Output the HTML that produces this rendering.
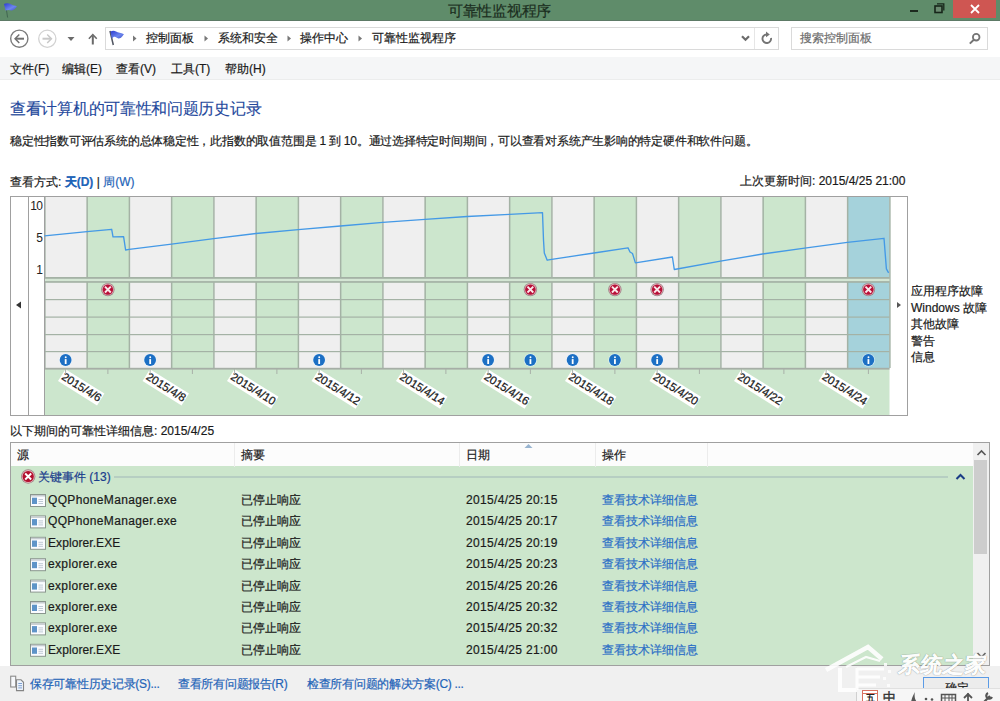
<!DOCTYPE html>
<html><head><meta charset="utf-8">
<style>
*{margin:0;padding:0;box-sizing:border-box}
html,body{width:1000px;height:701px;overflow:hidden;background:#fff;font-family:"Liberation Sans",sans-serif;font-size:12px;color:#1a1a1a;-webkit-text-stroke:0.2px currentColor}
.a{position:absolute;white-space:nowrap}
svg{-webkit-text-stroke:0}
#title{left:0;top:0;width:1000px;height:21px;background:#5f8c6a}
#menu{left:0;top:57px;width:1000px;height:23px;background:#f5f6f7;border-bottom:1px solid #eceded}
.lnk{color:#1f64b8}
.row{position:absolute;left:0;width:1000px;height:21px;line-height:16px}
.row span{position:absolute;top:0}
.c1{left:48px;letter-spacing:0.35px}.c2{left:241px}.c3{left:466px;letter-spacing:0.33px}.c4{left:602px;color:#2a6ec6}
</style></head><body>
<!-- title bar -->
<div class="a" id="title"></div>
<div class="a" style="left:448px;top:2px;font-size:15px;letter-spacing:-0.3px;color:#1b2e20;line-height:17px">可靠性监视程序</div>
<div class="a" style="left:953px;top:0;width:43px;height:18px;background:#cf5652"></div>
<svg class="a" style="left:0;top:0" width="1000" height="60">
 <rect x="0" y="20" width="1000" height="1" fill="#5d7a66"/>
 <!-- title flag -->
 <defs><linearGradient id="fg" x1="0" y1="0" x2="1" y2="1"><stop offset="0" stop-color="#2a3ad0"/><stop offset="0.6" stop-color="#6d86ee"/><stop offset="1" stop-color="#3d50c8"/></linearGradient></defs>
 <path d="M5.5,4 L7.6,17.5" stroke="#3b5e4c" stroke-width="1" opacity="0.8"/>
 <path d="M4,4 C6,2.8 9,3 11,4.3 C13,5.5 15,5.4 17,6.5 C15.5,8 14,10.6 11.5,10.4 C9.5,10.2 8,9.4 5.6,10.6 Z" fill="url(#fg)"/>
 <!-- min / restore / close -->
 <rect x="910" y="10" width="8" height="2" fill="#1c2a1e"/>
 <rect x="935" y="6" width="7" height="6.5" fill="#6a8a70" stroke="#17261a" stroke-width="1.6"/>
 <path d="M937,3.8 H943.8 V10.5" fill="none" stroke="#17261a" stroke-width="1.3"/>
 <path d="M971,5 L979,13 M979,5 L971,13" stroke="#fff" stroke-width="1.8"/>
 <!-- back / forward -->
 <circle cx="19.3" cy="38.7" r="8.6" fill="none" stroke="#7c7c7c" stroke-width="1.4"/>
 <path d="M16,38.7 H24" stroke="#707070" stroke-width="2"/><path d="M14,38.7 L18.8,34 L19.8,35 L16.2,38.7 L19.8,42.4 L18.8,43.4Z" fill="#707070"/>
 <circle cx="47.3" cy="38.7" r="8.6" fill="none" stroke="#d2d2d2" stroke-width="1.3"/>
 <path d="M42.5,38.7 H50.5" stroke="#c8c8c8" stroke-width="2"/><path d="M52.5,38.7 L47.7,34 L46.7,35 L50.3,38.7 L46.7,42.4 L47.7,43.4Z" fill="#c8c8c8"/>
 <path d="M67.5,37 H74.5 L71,41Z" fill="#6a6a6a"/>
 <path d="M92.8,44.5 V36" stroke="#6a6a6a" stroke-width="2"/><path d="M92.8,33.5 L97.3,38.2 L96.2,39.2 L92.8,35.8 L89.4,39.2 L88.3,38.2Z" fill="#6a6a6a"/>
 <!-- address bar -->
 <rect x="105.5" y="27.5" width="673" height="22" fill="#fff" stroke="#dadada"/>
 <rect x="754" y="28" width="1" height="21" fill="#e6e6e6"/>
 <rect x="791.5" y="27.5" width="196" height="22" fill="#fff" stroke="#dadada"/>
 <path d="M110,31 L113.3,45" stroke="#505560" stroke-width="1.5"/>
 <path d="M110.5,31.5 C112.5,30.3 114.5,30.4 116,31.5 C118,32.8 121,32.5 124,34.2 C122.5,35.5 121.5,38.6 118.5,38.4 C116.5,38.1 115.5,36.3 113.5,37 L111.8,38.8 Z" fill="url(#fg)"/>
 <path d="M133,35.5 L136.5,38.5 L133,41.5Z" fill="#777"/>
 <path d="M204.5,35.5 L208,38.5 L204.5,41.5Z" fill="#777"/>
 <path d="M287.5,35.5 L291,38.5 L287.5,41.5Z" fill="#777"/>
 <path d="M358.5,35.5 L362,38.5 L358.5,41.5Z" fill="#777"/>
 <path d="M742,36.3 L745.5,39.8 L749,36.3" fill="none" stroke="#6c6c6c" stroke-width="2.2"/>
 <path d="M771,38 A4.3,4.3 0 1 1 766.6,34.45" fill="none" stroke="#747474" stroke-width="1.9"/>
 <path d="M766,31.6 L769.8,34.45 L766,37.3Z" fill="#747474"/>
 <circle cx="976.2" cy="37.2" r="3.3" fill="none" stroke="#747474" stroke-width="1.8"/>
 <path d="M973.8,39.8 L969.8,43.6" stroke="#747474" stroke-width="2"/>
</svg>
<div class="a" style="left:146px;top:30px;line-height:16px">控制面板</div>
<div class="a" style="left:218px;top:30px;line-height:16px">系统和安全</div>
<div class="a" style="left:300px;top:30px;line-height:16px">操作中心</div>
<div class="a" style="left:372px;top:30px;line-height:16px">可靠性监视程序</div>
<div class="a" style="left:800px;top:30px;line-height:16px;color:#6d6d6d">搜索控制面板</div>
<!-- menu -->
<div class="a" id="menu"></div>
<div class="a" style="left:10px;top:61px;line-height:16px">文件(F)</div>
<div class="a" style="left:62px;top:61px;line-height:16px">编辑(E)</div>
<div class="a" style="left:116px;top:61px;line-height:16px">查看(V)</div>
<div class="a" style="left:171px;top:61px;line-height:16px">工具(T)</div>
<div class="a" style="left:225px;top:61px;line-height:16px">帮助(H)</div>
<!-- heading -->
<div class="a" style="left:10px;top:99px;font-size:16px;letter-spacing:-0.3px;line-height:20px;color:#24489c;-webkit-text-stroke:0.1px #24489c">查看计算机的可靠性和问题历史记录</div>
<div class="a" style="left:10px;top:133px;line-height:16px;letter-spacing:-0.22px">稳定性指数可评估系统的总体稳定性，此指数的取值范围是 1 到 10。通过选择特定时间期间，可以查看对系统产生影响的特定硬件和软件问题。</div>
<div class="a" style="left:10px;top:174px;line-height:16px">查看方式: <b class="lnk">天(D)</b> | <span class="lnk">周(W)</span></div>
<div class="a" style="left:740px;top:173px;line-height:16px">上次更新时间: 2015/4/25 21:00</div>
<!-- chart -->
<div class="a" style="left:10px;top:196px;width:898px;height:220px;border:1px solid #a0a0a0"></div>
<svg class="a" style="left:0;top:0" width="1000" height="701">
<rect x="44.50" y="197" width="42.25" height="172" fill="#efefef"/>
<rect x="86.75" y="197" width="42.25" height="172" fill="#cce6cd"/>
<rect x="129.00" y="197" width="42.25" height="172" fill="#efefef"/>
<rect x="171.25" y="197" width="42.25" height="172" fill="#cce6cd"/>
<rect x="213.50" y="197" width="42.25" height="172" fill="#efefef"/>
<rect x="255.75" y="197" width="42.25" height="172" fill="#cce6cd"/>
<rect x="298.00" y="197" width="42.25" height="172" fill="#efefef"/>
<rect x="340.25" y="197" width="42.25" height="172" fill="#cce6cd"/>
<rect x="382.50" y="197" width="42.25" height="172" fill="#efefef"/>
<rect x="424.75" y="197" width="42.25" height="172" fill="#cce6cd"/>
<rect x="467.00" y="197" width="42.25" height="172" fill="#efefef"/>
<rect x="509.25" y="197" width="42.25" height="172" fill="#cce6cd"/>
<rect x="551.50" y="197" width="42.25" height="172" fill="#efefef"/>
<rect x="593.75" y="197" width="42.25" height="172" fill="#cce6cd"/>
<rect x="636.00" y="197" width="42.25" height="172" fill="#efefef"/>
<rect x="678.25" y="197" width="42.25" height="172" fill="#cce6cd"/>
<rect x="720.50" y="197" width="42.25" height="172" fill="#efefef"/>
<rect x="762.75" y="197" width="42.25" height="172" fill="#cce6cd"/>
<rect x="805.00" y="197" width="42.25" height="172" fill="#efefef"/>
<rect x="847.25" y="197" width="42.25" height="172" fill="#a5d2db"/>
<rect x="44.5" y="369" width="845.00" height="46" fill="#cce6cd"/>
<rect x="44.5" y="277" width="845.00" height="5.8" fill="#a4b2a5"/>
<rect x="44.5" y="299.0" width="845.00" height="1.2" fill="#a4b2a5"/>
<rect x="44.5" y="316.5" width="845.00" height="1.2" fill="#a4b2a5"/>
<rect x="44.5" y="334.0" width="845.00" height="1.2" fill="#a4b2a5"/>
<rect x="44.5" y="351.0" width="845.00" height="1.2" fill="#a4b2a5"/>
<rect x="44.5" y="367.8" width="845.00" height="1.8" fill="#a6aea6"/>
<rect x="44.15" y="197" width="1.5" height="171" fill="#a4b2a5"/>
<rect x="86.40" y="197" width="1.5" height="171" fill="#a4b2a5"/>
<rect x="128.65" y="197" width="1.5" height="171" fill="#a4b2a5"/>
<rect x="170.90" y="197" width="1.5" height="171" fill="#a4b2a5"/>
<rect x="213.15" y="197" width="1.5" height="171" fill="#a4b2a5"/>
<rect x="255.40" y="197" width="1.5" height="171" fill="#a4b2a5"/>
<rect x="297.65" y="197" width="1.5" height="171" fill="#a4b2a5"/>
<rect x="339.90" y="197" width="1.5" height="171" fill="#a4b2a5"/>
<rect x="382.15" y="197" width="1.5" height="171" fill="#a4b2a5"/>
<rect x="424.40" y="197" width="1.5" height="171" fill="#a4b2a5"/>
<rect x="466.65" y="197" width="1.5" height="171" fill="#a4b2a5"/>
<rect x="508.90" y="197" width="1.5" height="171" fill="#a4b2a5"/>
<rect x="551.15" y="197" width="1.5" height="171" fill="#a4b2a5"/>
<rect x="593.40" y="197" width="1.5" height="171" fill="#a4b2a5"/>
<rect x="635.65" y="197" width="1.5" height="171" fill="#a4b2a5"/>
<rect x="677.90" y="197" width="1.5" height="171" fill="#a4b2a5"/>
<rect x="720.15" y="197" width="1.5" height="171" fill="#a4b2a5"/>
<rect x="762.40" y="197" width="1.5" height="171" fill="#a4b2a5"/>
<rect x="804.65" y="197" width="1.5" height="171" fill="#a4b2a5"/>
<rect x="846.90" y="197" width="1.5" height="171" fill="#a4b2a5"/>
<rect x="889.15" y="197" width="1.5" height="171" fill="#a4b2a5"/>
<rect x="44.5" y="278.8" width="845.00" height="2.3" fill="#d4e6d4"/>
<rect x="28" y="197" width="1" height="218" fill="#a0a0a0"/>
<rect x="44" y="197" width="1" height="218" fill="#a0a0a0"/>
<text x="42.3" y="209.5" text-anchor="end" font-size="12" letter-spacing="-0.6" fill="#222">10</text>
<text x="42.3" y="241.5" text-anchor="end" font-size="12" letter-spacing="-0.6" fill="#222">5</text>
<text x="42.3" y="274" text-anchor="end" font-size="12" letter-spacing="-0.6" fill="#222">1</text>
<polyline fill="none" stroke="#4499e6" stroke-width="1.35" stroke-linejoin="round" points="44.5,235.8 87,231.6 111.7,229.3 113,236.9 123.6,236.6 125.6,250 129.25,249.3 171.5,244.2 213.75,238.6 256,233.5 298.25,229.6 340.5,226 382.75,222.4 425,219.4 467.25,216.5 509.5,214.4 542.5,212.7 543.5,240 544.3,253 547.2,260.2 551.75,259.4 594,253 628,247.8 630,252 632.5,253.5 635.4,262.9 672.4,257 674.3,269.5 720.5,261.2 762.5,254 804.7,248.2 847.3,242.3 884,238.3 886.4,268.9 888.6,272.8"/>
<g transform="translate(107.88,289.60)"><circle r="6.7" fill="#9c8286"/><circle r="6" fill="#dcaab2"/><circle r="5.2" fill="#b81038"/><path d="M-2.9,-2.9L2.9,2.9M2.9,-2.9L-2.9,2.9" stroke="#fbe8ea" stroke-width="1.9"/></g>
<g transform="translate(530.38,289.60)"><circle r="6.7" fill="#9c8286"/><circle r="6" fill="#dcaab2"/><circle r="5.2" fill="#b81038"/><path d="M-2.9,-2.9L2.9,2.9M2.9,-2.9L-2.9,2.9" stroke="#fbe8ea" stroke-width="1.9"/></g>
<g transform="translate(614.88,289.60)"><circle r="6.7" fill="#9c8286"/><circle r="6" fill="#dcaab2"/><circle r="5.2" fill="#b81038"/><path d="M-2.9,-2.9L2.9,2.9M2.9,-2.9L-2.9,2.9" stroke="#fbe8ea" stroke-width="1.9"/></g>
<g transform="translate(657.12,289.60)"><circle r="6.7" fill="#9c8286"/><circle r="6" fill="#dcaab2"/><circle r="5.2" fill="#b81038"/><path d="M-2.9,-2.9L2.9,2.9M2.9,-2.9L-2.9,2.9" stroke="#fbe8ea" stroke-width="1.9"/></g>
<g transform="translate(868.38,289.60)"><circle r="6.7" fill="#9c8286"/><circle r="6" fill="#dcaab2"/><circle r="5.2" fill="#b81038"/><path d="M-2.9,-2.9L2.9,2.9M2.9,-2.9L-2.9,2.9" stroke="#fbe8ea" stroke-width="1.9"/></g>
<g transform="translate(65.62,360.00)"><circle r="6.6" fill="#e6f4ff" opacity="0.7"/><circle r="5.9" fill="#1c6fc4"/><circle cx="0.1" cy="-2.8" r="0.95" fill="#fff"/><rect x="-0.85" y="-0.9" width="1.8" height="4.9" fill="#fff"/></g>
<g transform="translate(150.12,360.00)"><circle r="6.6" fill="#e6f4ff" opacity="0.7"/><circle r="5.9" fill="#1c6fc4"/><circle cx="0.1" cy="-2.8" r="0.95" fill="#fff"/><rect x="-0.85" y="-0.9" width="1.8" height="4.9" fill="#fff"/></g>
<g transform="translate(319.12,360.00)"><circle r="6.6" fill="#e6f4ff" opacity="0.7"/><circle r="5.9" fill="#1c6fc4"/><circle cx="0.1" cy="-2.8" r="0.95" fill="#fff"/><rect x="-0.85" y="-0.9" width="1.8" height="4.9" fill="#fff"/></g>
<g transform="translate(488.12,360.00)"><circle r="6.6" fill="#e6f4ff" opacity="0.7"/><circle r="5.9" fill="#1c6fc4"/><circle cx="0.1" cy="-2.8" r="0.95" fill="#fff"/><rect x="-0.85" y="-0.9" width="1.8" height="4.9" fill="#fff"/></g>
<g transform="translate(530.38,360.00)"><circle r="6.6" fill="#e6f4ff" opacity="0.7"/><circle r="5.9" fill="#1c6fc4"/><circle cx="0.1" cy="-2.8" r="0.95" fill="#fff"/><rect x="-0.85" y="-0.9" width="1.8" height="4.9" fill="#fff"/></g>
<g transform="translate(572.62,360.00)"><circle r="6.6" fill="#e6f4ff" opacity="0.7"/><circle r="5.9" fill="#1c6fc4"/><circle cx="0.1" cy="-2.8" r="0.95" fill="#fff"/><rect x="-0.85" y="-0.9" width="1.8" height="4.9" fill="#fff"/></g>
<g transform="translate(614.88,360.00)"><circle r="6.6" fill="#e6f4ff" opacity="0.7"/><circle r="5.9" fill="#1c6fc4"/><circle cx="0.1" cy="-2.8" r="0.95" fill="#fff"/><rect x="-0.85" y="-0.9" width="1.8" height="4.9" fill="#fff"/></g>
<g transform="translate(657.12,360.00)"><circle r="6.6" fill="#e6f4ff" opacity="0.7"/><circle r="5.9" fill="#1c6fc4"/><circle cx="0.1" cy="-2.8" r="0.95" fill="#fff"/><rect x="-0.85" y="-0.9" width="1.8" height="4.9" fill="#fff"/></g>
<g transform="translate(868.38,360.00)"><circle r="6.6" fill="#e6f4ff" opacity="0.7"/><circle r="5.9" fill="#1c6fc4"/><circle cx="0.1" cy="-2.8" r="0.95" fill="#fff"/><rect x="-0.85" y="-0.9" width="1.8" height="4.9" fill="#fff"/></g>
<g transform="translate(66.03,370.2) rotate(32)"><rect x="-1" y="-0.5" width="46" height="14" fill="#fff"/><text x="0" y="10" font-size="11.4" fill="#1a1a1a" stroke="#1a1a1a" stroke-width="0.25">2015/4/6</text></g>
<g transform="translate(150.53,370.2) rotate(32)"><rect x="-1" y="-0.5" width="46" height="14" fill="#fff"/><text x="0" y="10" font-size="11.4" fill="#1a1a1a" stroke="#1a1a1a" stroke-width="0.25">2015/4/8</text></g>
<g transform="translate(235.03,370.2) rotate(32)"><rect x="-1" y="-0.5" width="52" height="14" fill="#fff"/><text x="0" y="10" font-size="11.4" fill="#1a1a1a" stroke="#1a1a1a" stroke-width="0.25">2015/4/10</text></g>
<g transform="translate(319.52,370.2) rotate(32)"><rect x="-1" y="-0.5" width="52" height="14" fill="#fff"/><text x="0" y="10" font-size="11.4" fill="#1a1a1a" stroke="#1a1a1a" stroke-width="0.25">2015/4/12</text></g>
<g transform="translate(404.02,370.2) rotate(32)"><rect x="-1" y="-0.5" width="52" height="14" fill="#fff"/><text x="0" y="10" font-size="11.4" fill="#1a1a1a" stroke="#1a1a1a" stroke-width="0.25">2015/4/14</text></g>
<g transform="translate(488.52,370.2) rotate(32)"><rect x="-1" y="-0.5" width="52" height="14" fill="#fff"/><text x="0" y="10" font-size="11.4" fill="#1a1a1a" stroke="#1a1a1a" stroke-width="0.25">2015/4/16</text></g>
<g transform="translate(573.02,370.2) rotate(32)"><rect x="-1" y="-0.5" width="52" height="14" fill="#fff"/><text x="0" y="10" font-size="11.4" fill="#1a1a1a" stroke="#1a1a1a" stroke-width="0.25">2015/4/18</text></g>
<g transform="translate(657.52,370.2) rotate(32)"><rect x="-1" y="-0.5" width="52" height="14" fill="#fff"/><text x="0" y="10" font-size="11.4" fill="#1a1a1a" stroke="#1a1a1a" stroke-width="0.25">2015/4/20</text></g>
<g transform="translate(742.02,370.2) rotate(32)"><rect x="-1" y="-0.5" width="52" height="14" fill="#fff"/><text x="0" y="10" font-size="11.4" fill="#1a1a1a" stroke="#1a1a1a" stroke-width="0.25">2015/4/22</text></g>
<g transform="translate(826.52,370.2) rotate(32)"><rect x="-1" y="-0.5" width="52" height="14" fill="#fff"/><text x="0" y="10" font-size="11.4" fill="#1a1a1a" stroke="#1a1a1a" stroke-width="0.25">2015/4/24</text></g>
<rect x="65.12" y="369" width="1" height="5" fill="#a8b0a8"/>
<rect x="107.38" y="369" width="1" height="5" fill="#a8b0a8"/>
<rect x="149.62" y="369" width="1" height="5" fill="#a8b0a8"/>
<rect x="191.88" y="369" width="1" height="5" fill="#a8b0a8"/>
<rect x="234.12" y="369" width="1" height="5" fill="#a8b0a8"/>
<rect x="276.38" y="369" width="1" height="5" fill="#a8b0a8"/>
<rect x="318.62" y="369" width="1" height="5" fill="#a8b0a8"/>
<rect x="360.88" y="369" width="1" height="5" fill="#a8b0a8"/>
<rect x="403.12" y="369" width="1" height="5" fill="#a8b0a8"/>
<rect x="445.38" y="369" width="1" height="5" fill="#a8b0a8"/>
<rect x="487.62" y="369" width="1" height="5" fill="#a8b0a8"/>
<rect x="529.88" y="369" width="1" height="5" fill="#a8b0a8"/>
<rect x="572.12" y="369" width="1" height="5" fill="#a8b0a8"/>
<rect x="614.38" y="369" width="1" height="5" fill="#a8b0a8"/>
<rect x="656.62" y="369" width="1" height="5" fill="#a8b0a8"/>
<rect x="698.88" y="369" width="1" height="5" fill="#a8b0a8"/>
<rect x="741.12" y="369" width="1" height="5" fill="#a8b0a8"/>
<rect x="783.38" y="369" width="1" height="5" fill="#a8b0a8"/>
<rect x="825.62" y="369" width="1" height="5" fill="#a8b0a8"/>
<rect x="867.88" y="369" width="1" height="5" fill="#a8b0a8"/>
<path d="M16,305 L21,301.5 L21,308.5Z" fill="#333"/>
<path d="M901,305 L897,302 L897,308Z" fill="#555"/>
</svg>
<div class="a" style="left:911px;top:283px;line-height:16px">应用程序故障</div>
<div class="a" style="left:911px;top:300px;line-height:16px">Windows 故障</div>
<div class="a" style="left:911px;top:316px;line-height:16px">其他故障</div>
<div class="a" style="left:911px;top:333px;line-height:16px">警告</div>
<div class="a" style="left:911px;top:349px;line-height:16px">信息</div>
<!-- details -->
<div class="a" style="left:10px;top:423px;line-height:16px">以下期间的可靠性详细信息: 2015/4/25</div>
<div class="a" style="left:10px;top:442px;width:980px;height:224px;border:1px solid #a0a0a0;background:#fff"></div>
<div class="a" style="left:11px;top:443px;width:963px;height:23px;background:#fcfcfc"></div>
<div class="a" style="left:11px;top:466px;width:962px;height:199px;background:#cce6cc"></div>
<svg class="a" style="left:0;top:440px" width="1000" height="230">
 <rect x="234" y="3" width="1" height="24" fill="#ececec"/>
 <rect x="459" y="3" width="1" height="24" fill="#ececec"/>
 <rect x="595" y="3" width="1" height="24" fill="#ececec"/>
 <rect x="707" y="3" width="1" height="24" fill="#ececec"/>
 <path d="M524.5,8 L528.5,4 L532.5,8Z" fill="#98b4d0"/>
 <!-- scrollbar -->
 <rect x="973" y="3" width="16" height="222" fill="#f0f0f0"/>
 <rect x="974" y="20" width="13" height="94" fill="#cdcdcd"/>
 <path d="M977.5,15 L981.5,11 L985.5,15" fill="none" stroke="#555" stroke-width="1.6"/>
 <path d="M977.5,213 L981.5,217 L985.5,213" fill="none" stroke="#666" stroke-width="1.6"/>
 <!-- group line -->
 <rect x="114" y="36.5" width="834" height="1" fill="#9fb6b8"/>
 <path d="M956.5,39 L960.5,35 L964.5,39" fill="none" stroke="#1a3c86" stroke-width="2"/>
 <g transform="translate(28.2,36.5)"><circle r="7.2" fill="#a08888"/><circle r="6.4" fill="#e6b0b8"/><circle r="5.6" fill="#b2102e"/><path d="M-3,-3L3,3M3,-3L-3,3" stroke="#fff" stroke-width="1.9"/></g>
</svg>
<div class="a" style="left:17px;top:447px;line-height:16px">源</div>
<div class="a" style="left:241px;top:447px;line-height:16px">摘要</div>
<div class="a" style="left:466px;top:447px;line-height:16px">日期</div>
<div class="a" style="left:602px;top:447px;line-height:16px">操作</div>
<div class="a" style="left:38px;top:469px;line-height:16px;color:#1a3c8c">关键事件 (13)</div>
<div class="row" style="top:492.0px"><span class="c1">QQPhoneManager.exe</span><span class="c2">已停止响应</span><span class="c3">2015/4/25 20:15</span><span class="c4">查看技术详细信息</span></div>
<div class="row" style="top:513.4px"><span class="c1">QQPhoneManager.exe</span><span class="c2">已停止响应</span><span class="c3">2015/4/25 20:17</span><span class="c4">查看技术详细信息</span></div>
<div class="row" style="top:534.8px"><span class="c1" style="letter-spacing:0.08px">Explorer.EXE</span><span class="c2">已停止响应</span><span class="c3">2015/4/25 20:19</span><span class="c4">查看技术详细信息</span></div>
<div class="row" style="top:556.2px"><span class="c1">explorer.exe</span><span class="c2">已停止响应</span><span class="c3">2015/4/25 20:23</span><span class="c4">查看技术详细信息</span></div>
<div class="row" style="top:577.6px"><span class="c1">explorer.exe</span><span class="c2">已停止响应</span><span class="c3">2015/4/25 20:26</span><span class="c4">查看技术详细信息</span></div>
<div class="row" style="top:599.0px"><span class="c1">explorer.exe</span><span class="c2">已停止响应</span><span class="c3">2015/4/25 20:32</span><span class="c4">查看技术详细信息</span></div>
<div class="row" style="top:620.4px"><span class="c1">explorer.exe</span><span class="c2">已停止响应</span><span class="c3">2015/4/25 20:32</span><span class="c4">查看技术详细信息</span></div>
<div class="row" style="top:641.8px"><span class="c1" style="letter-spacing:0.08px">Explorer.EXE</span><span class="c2">已停止响应</span><span class="c3">2015/4/25 21:00</span><span class="c4">查看技术详细信息</span></div>
<svg class="a" style="left:0;top:0" width="1000" height="701">
<g transform="translate(30,494.0)"><rect x="0.5" y="0.5" width="15" height="12" fill="#fafcff" stroke="#8a968e"/><rect x="1" y="1" width="14" height="1.5" fill="#c6ccd0"/><rect x="2" y="3.7" width="5" height="6.3" fill="#5e94c8"/><path d="M8.5,5.5 H13 M8.5,7.5 H13 M8.5,9.5 H13" stroke="#b8c4d0" stroke-width="0.9"/></g>
<g transform="translate(30,515.4)"><rect x="0.5" y="0.5" width="15" height="12" fill="#fafcff" stroke="#8a968e"/><rect x="1" y="1" width="14" height="1.5" fill="#c6ccd0"/><rect x="2" y="3.7" width="5" height="6.3" fill="#5e94c8"/><path d="M8.5,5.5 H13 M8.5,7.5 H13 M8.5,9.5 H13" stroke="#b8c4d0" stroke-width="0.9"/></g>
<g transform="translate(30,536.8)"><rect x="0.5" y="0.5" width="15" height="12" fill="#fafcff" stroke="#8a968e"/><rect x="1" y="1" width="14" height="1.5" fill="#c6ccd0"/><rect x="2" y="3.7" width="5" height="6.3" fill="#5e94c8"/><path d="M8.5,5.5 H13 M8.5,7.5 H13 M8.5,9.5 H13" stroke="#b8c4d0" stroke-width="0.9"/></g>
<g transform="translate(30,558.2)"><rect x="0.5" y="0.5" width="15" height="12" fill="#fafcff" stroke="#8a968e"/><rect x="1" y="1" width="14" height="1.5" fill="#c6ccd0"/><rect x="2" y="3.7" width="5" height="6.3" fill="#5e94c8"/><path d="M8.5,5.5 H13 M8.5,7.5 H13 M8.5,9.5 H13" stroke="#b8c4d0" stroke-width="0.9"/></g>
<g transform="translate(30,579.6)"><rect x="0.5" y="0.5" width="15" height="12" fill="#fafcff" stroke="#8a968e"/><rect x="1" y="1" width="14" height="1.5" fill="#c6ccd0"/><rect x="2" y="3.7" width="5" height="6.3" fill="#5e94c8"/><path d="M8.5,5.5 H13 M8.5,7.5 H13 M8.5,9.5 H13" stroke="#b8c4d0" stroke-width="0.9"/></g>
<g transform="translate(30,601.0)"><rect x="0.5" y="0.5" width="15" height="12" fill="#fafcff" stroke="#8a968e"/><rect x="1" y="1" width="14" height="1.5" fill="#c6ccd0"/><rect x="2" y="3.7" width="5" height="6.3" fill="#5e94c8"/><path d="M8.5,5.5 H13 M8.5,7.5 H13 M8.5,9.5 H13" stroke="#b8c4d0" stroke-width="0.9"/></g>
<g transform="translate(30,622.4)"><rect x="0.5" y="0.5" width="15" height="12" fill="#fafcff" stroke="#8a968e"/><rect x="1" y="1" width="14" height="1.5" fill="#c6ccd0"/><rect x="2" y="3.7" width="5" height="6.3" fill="#5e94c8"/><path d="M8.5,5.5 H13 M8.5,7.5 H13 M8.5,9.5 H13" stroke="#b8c4d0" stroke-width="0.9"/></g>
<g transform="translate(30,643.8)"><rect x="0.5" y="0.5" width="15" height="12" fill="#fafcff" stroke="#8a968e"/><rect x="1" y="1" width="14" height="1.5" fill="#c6ccd0"/><rect x="2" y="3.7" width="5" height="6.3" fill="#5e94c8"/><path d="M8.5,5.5 H13 M8.5,7.5 H13 M8.5,9.5 H13" stroke="#b8c4d0" stroke-width="0.9"/></g>
</svg>
<!-- footer -->
<div class="a" style="left:0;top:666px;width:1000px;height:35px;background:#f0f0f0"></div>
<svg class="a" style="left:0;top:666px" width="40" height="35">
 <rect x="10.7" y="10.2" width="5" height="10.8" fill="#f6f8fb" stroke="#8c8c8c" stroke-width="1.1"/>
 <path d="M16.5,13.8 H21 L23.5,16.3 V24.6 H16.5Z" fill="#eef4fb" stroke="#858585" stroke-width="1.1"/>
 <path d="M18.3,17.5 H22 M18.3,19.7 H22 M18.3,21.9 H22" stroke="#7d9fd2" stroke-width="1"/>
</svg>
<div class="a lnk" style="left:30px;top:676px;line-height:16px;letter-spacing:-0.3px">保存可靠性历史记录(S)...</div>
<div class="a lnk" style="left:178px;top:676px;line-height:16px;letter-spacing:-0.3px">查看所有问题报告(R)</div>
<div class="a lnk" style="left:307px;top:676px;line-height:16px;letter-spacing:-0.3px">检查所有问题的解决方案(C) ...</div>
<!-- dialog button + IME bar + watermark -->
<div class="a" style="left:923px;top:677px;width:66px;height:30px;border:1px solid #5b9be6;background:#ececec"></div>
<div class="a" style="left:945px;top:680px;line-height:16px">确定</div>
<div class="a" style="left:856px;top:688px;width:144px;height:13px;background:#f6f6f6;border-left:1px solid #d0d0d0;border-top:1px solid #e0e0e0"></div>
<svg class="a" style="left:820px;top:640px" width="180" height="61">
 <!-- IME icons -->
 <rect x="42.5" y="50.5" width="15" height="12" fill="#fff" stroke="#d97060"/>
 <path d="M43,53.5 H57" stroke="#d97060"/>
 <text x="46" y="61" font-size="9" font-weight="bold" fill="#222">五</text>
 <text x="63" y="62" font-size="13" fill="#333" stroke="#333" stroke-width="0.4">中</text>
 <path d="M91,62 C92,57 94,54 95,52 C94,56 95,60 97,62Z" fill="#555"/>
 <circle cx="106" cy="59" r="1.3" fill="#555"/><circle cx="112" cy="59.5" r="1.3" fill="#555"/>
 <rect x="121.5" y="54.5" width="14" height="8" fill="none" stroke="#555" stroke-width="1.5"/>
 <path d="M121.5,58 H135.5 M125,54.5 V62 M129,54.5 V62 M132,54.5 V62" stroke="#555" stroke-width="1"/>
 <path d="M148,53 V62 M144,58 L148,54 L152,58" fill="none" stroke="#555" stroke-width="1.8"/>
 <path d="M164,62 L170,56 M168,53 A3,3 0 1 0 172,57" fill="none" stroke="#555" stroke-width="2.2"/>
 <!-- house watermark -->
 <g fill="none" stroke="#fff" opacity="0.9" stroke-linejoin="miter">
  <path d="M6,30 L48,7 L62,19" stroke-width="4.5"/>
  <path d="M26,27 L46,17 L60,21" stroke-width="2.2"/>
  <path d="M20,28 V50 H37" stroke-width="4"/>
  <path d="M37,28 V50 M37,29 H64 M37,37 H60 M37,45 H56" stroke-width="3"/>
 </g>
 <g fill="#fff" opacity="0.85"><rect x="64" y="23" width="3" height="3"/><rect x="68" y="30" width="3" height="3"/><rect x="63" y="37" width="3" height="3"/><rect x="67" y="44" width="3" height="3"/></g>
</svg>
<div class="a" style="left:899px;top:651px;font-size:21.5px;line-height:28px;font-weight:bold;color:#fff;opacity:0.93;text-shadow:0 0 1px rgba(60,60,60,0.7),0 0 1px rgba(60,60,60,0.5);transform:skewX(-8deg)">系统之家</div>

</body></html>
